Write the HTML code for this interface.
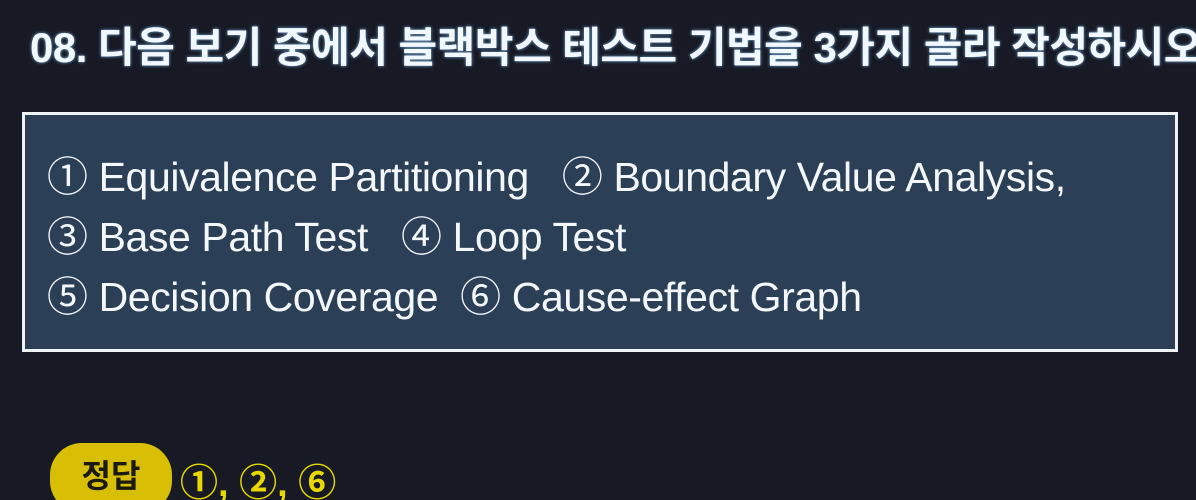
<!DOCTYPE html>
<html><head><meta charset="utf-8"><style>
html,body{margin:0;width:1196px;height:500px;overflow:hidden}
body{background:#171a25;font-family:"Liberation Sans","Noto Sans CJK KR",sans-serif;position:relative}
.t{position:absolute;left:30px;top:14px;white-space:nowrap;font-size:42px;font-weight:bold;color:#f2f8ff;letter-spacing:-0.5px;text-shadow:0 0 3px #7ab0e0}
.box{position:absolute;left:22px;top:112px;width:1150px;height:234px;border:3px solid #f0f4f8;background:#2b3f56}
.l{position:absolute;left:22px;font-size:41px;color:#f4f8fc;white-space:nowrap;letter-spacing:-0.4px}
.pill{position:absolute;left:50px;top:443px;width:122px;height:70px;border-radius:32px;background:#d8bf05;color:#1a1a10;font-size:32px;font-weight:bold;text-align:center;line-height:66px}
.ans{position:absolute;left:180px;top:452px;font-size:38px;font-weight:bold;color:#e8d800;white-space:nowrap}
</style></head><body>
<div class="t">08. 다음 보기 중에서 블랙박스 테스트 기법을 3가지 골라 작성하시오</div>
<div class="box">
<div class="l" style="top:28px">① Equivalence Partitioning &nbsp;&nbsp;② Boundary Value Analysis,</div>
<div class="l" style="top:88px">③ Base Path Test &nbsp;&nbsp;④ Loop Test</div>
<div class="l" style="top:148px">⑤ Decision Coverage &nbsp;⑥ Cause-effect Graph</div>
</div>
<div class="pill">정답</div>
<div class="ans">①, ②, ⑥</div>
</body></html>
